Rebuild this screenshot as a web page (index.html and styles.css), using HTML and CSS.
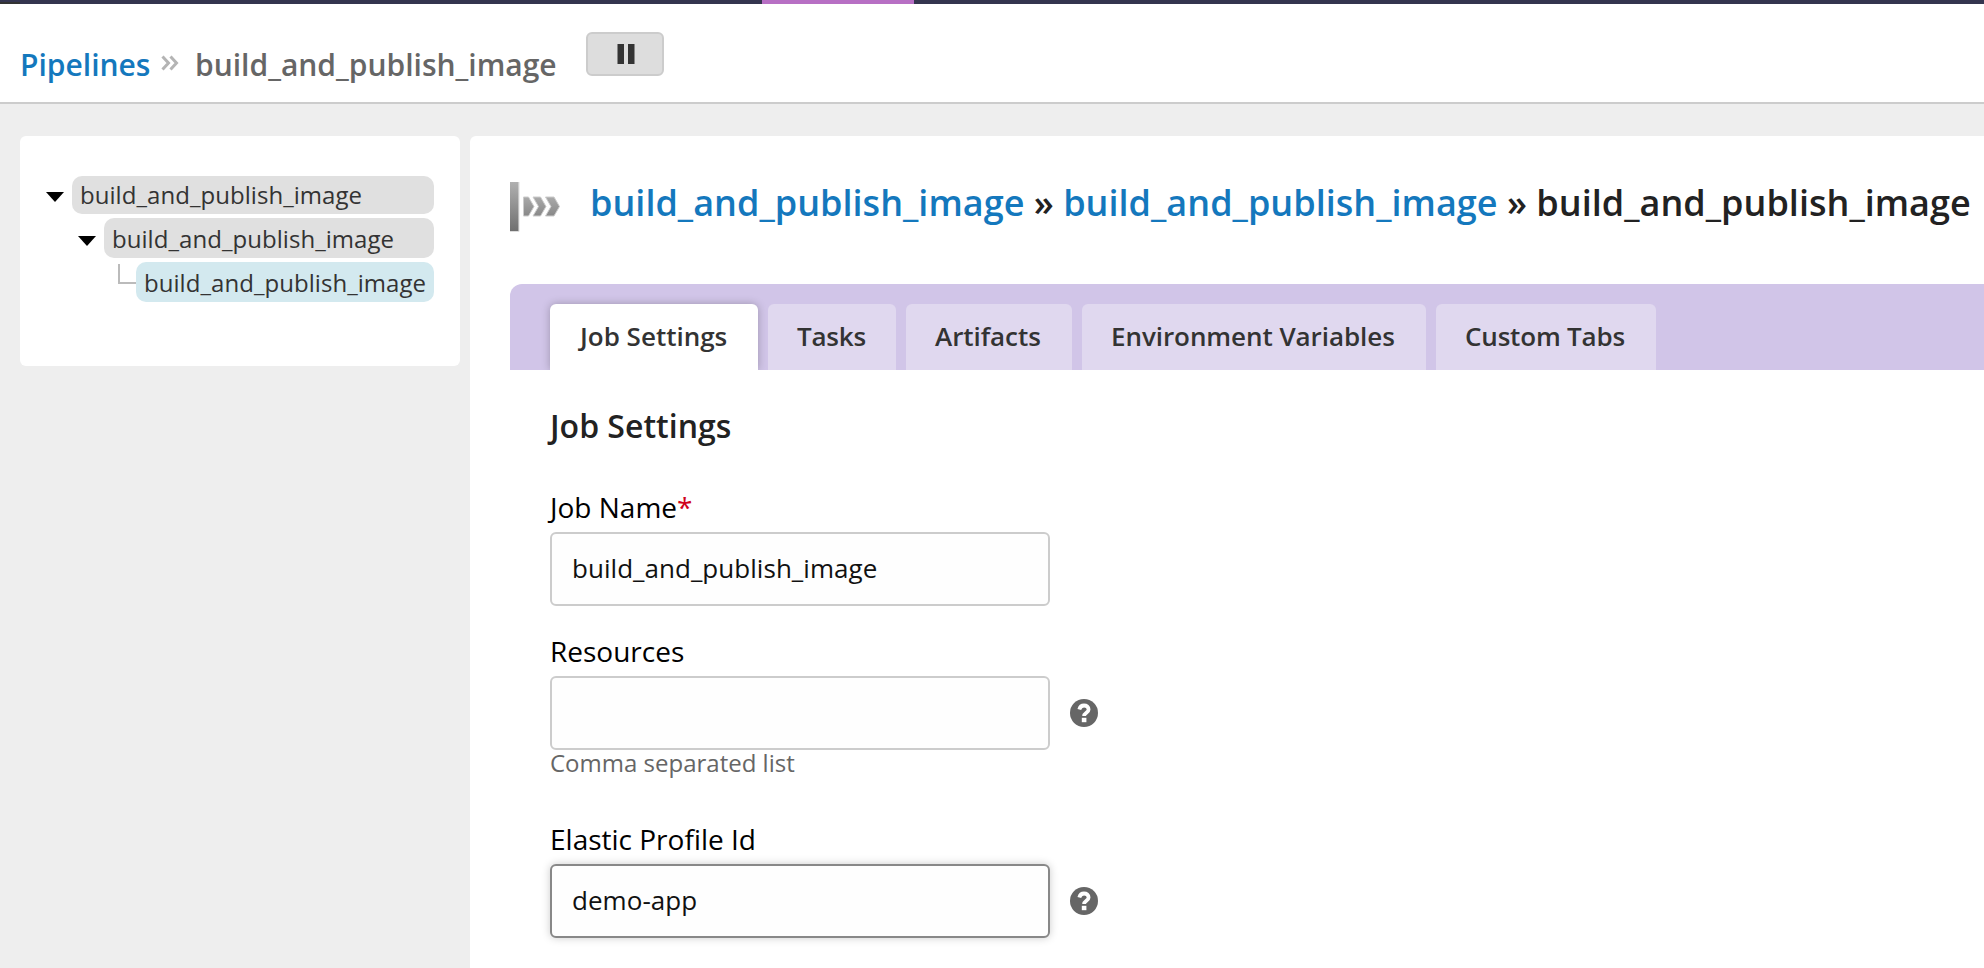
FILE: index.html
```html
<!DOCTYPE html>
<html lang="en">
<head>
<meta charset="utf-8">
<title>Job Settings</title>
<link rel="stylesheet" href="styles.css">
</head>
<body>
<div class="topbar"><span class="topbar-start"></span><span class="topbar-active"></span></div>
<header class="header">
  <a class="crumb-link">Pipelines</a>
  <svg class="crumb-sep" width="18" height="16" viewBox="0 0 18 16"><path d="M1.500 1.500 7.500 8l-6 6.500M9.500 1.500 15.500 8l-6 6.500" fill="none" stroke="#b4b4b4" stroke-width="3"/></svg>
  <span class="crumb-current">build_and_publish_image</span>
  <button class="pause"><svg class="pause-icon" width="18" height="22" viewBox="0 0 18 22"><path d="M.5 1h6.500v20H.5zM11 1h6.500v20H11z" fill="#333"/></svg></button>
</header>
<div class="layout">
  <nav class="sidebar">
    <div class="tree">
      <div class="node"><span class="arrow"></span><a class="label first">build_and_publish_image</a></div>
      <div class="node level2"><span class="arrow"></span><a class="label">build_and_publish_image</a></div>
      <div class="node level3"><span class="elbow"></span><a class="label selected">build_and_publish_image</a></div>
    </div>
  </nav>
  <main class="main">
    <div class="title-row">
      <svg class="job-icon" width="52" height="54" viewBox="0 0 52 54">
        <defs><linearGradient id="g" x1="0" y1="0" x2="0" y2="1"><stop offset="0" stop-color="#b0b0b0"/><stop offset="1" stop-color="#707070"/></linearGradient>
        <linearGradient id="h" x1="0" y1="0" x2="0" y2="1"><stop offset="0" stop-color="#aaa"/><stop offset="1" stop-color="#888"/></linearGradient></defs>
        <path d="M0 51.500h9V2" fill="none" stroke="#ddd"/>
        <path d="M0 2h8.500v49H0z" fill="url(#g)"/>
        <path d="M13.500 17h5l5.500 9.500-5.500 9.500h-5zM23 17h7.500l5.500 9.500-5.500 9.500H23l5.500-9.500zM35.500 17H44l5.500 9.500L44 36h-8.500l5.500-9.500z" fill="url(#h)" stroke="#ccc" stroke-width="1"/>
      </svg>
      <h1 class="title"><a>build_and_publish_image</a> » <a>build_and_publish_image</a> » build_and_publish_image</h1>
    </div>
    <div class="tabs">
      <a class="tab settings active">Job Settings</a><a class="tab tasks">Tasks</a><a class="tab artifacts">Artifacts</a><a class="tab environment">Environment Variables</a><a class="tab custom">Custom Tabs</a>
    </div>
    <form class="form">
      <h2 class="form-title">Job Settings</h2>
      <div class="field">
        <label class="field-label">Job Name<span class="required">*</span></label>
        <div class="control"><input class="input" type="text" value="build_and_publish_image"></div>
      </div>
      <div class="field resources">
        <label class="field-label">Resources</label>
        <div class="control"><input class="input" type="text" value="">
          <svg class="help" width="28" height="28" viewBox="0 0 28 28"><circle cx="14" cy="14" r="14" fill="#666"/><path d="M9.300 10.500C10 7.800 11.800 6.500 14 6.500c2.600 0 4.600 1.500 4.600 3.900 0 3.300-4.500 3.300-4.500 6.600" fill="none" stroke="#fff" stroke-width="3.800"/><path d="M11.800 18.800h4.600v4.400h-4.600z" fill="#fff"/></svg></div>
        <div class="hint">Comma separated list</div>
      </div>
      <div class="field elastic">
        <label class="field-label">Elastic Profile Id</label>
        <div class="control"><input class="input focused" type="text" value="demo-app">
          <svg class="help" width="28" height="28" viewBox="0 0 28 28"><circle cx="14" cy="14" r="14" fill="#666"/><path d="M9.300 10.500C10 7.800 11.800 6.500 14 6.500c2.600 0 4.600 1.500 4.600 3.900 0 3.300-4.500 3.300-4.500 6.600" fill="none" stroke="#fff" stroke-width="3.800"/><path d="M11.800 18.800h4.600v4.400h-4.600z" fill="#fff"/></svg></div>
      </div>
    </form>
  </main>
</div>
</body>
</html>
```
FILE: styles.css
```css
* { box-sizing: border-box; }
body { margin: 0; height: 968px; overflow: hidden; background: #eee; font-family: "Open Sans", sans-serif; color: #000; display: flex; flex-direction: column; }
a { color: #1478bd; }
.topbar { height: 4px; background: #34354f; display: flex; flex: none; }
.topbar-start { width: 20px; margin-top: 2px; background: #333; }
.topbar-active { width: 152px; margin-left: 742px; background: #b76fc4; }
.header { height: 100px; flex: none; background: #fff; border-bottom: 2px solid #ccc; display: flex; align-items: flex-start; padding: 28px 20px 0; font-size: 30px; font-weight: 600; line-height: 66px; white-space: nowrap; }
.crumb-link { width: 130px; }
.crumb-sep { margin: 23px 16px 0 11px; flex: none; }
.crumb-current { color: #666; width: 391px; }
.pause { width: 78px; height: 44px; padding: 0; background: #ddd; border: 2px solid #ccc; border-radius: 6px; display: flex; align-items: center; justify-content: center; }
.pause-icon { margin-left: 2px; }
.layout { flex: 1; display: flex; align-items: flex-start; padding: 32px 0 0 20px; gap: 10px; min-height: 0; }
.sidebar { width: 440px; height: 230px; flex: none; background: #fff; border-radius: 6px; padding: 40px 26px; }
.tree { display: flex; flex-direction: column; gap: 4px; font-size: 24px; letter-spacing: .05px; }
.node { display: flex; }
.level2 { padding-left: 32px; }
.level3 { padding-left: 72px; }
.arrow { width: 18px; height: 10px; margin: 16px 8px 0 0; background: #000; clip-path: polygon(0 0, 100% 0, 50% 100%); flex: none; }
.level2 .arrow { margin-top: 18px; }
.elbow { width: 18px; height: 20px; margin-top: 2px; border-left: 2px solid #bbb; border-bottom: 2px solid #bbb; flex: none; }
.label { flex: 1; height: 40px; padding-left: 8px; line-height: 42px; background: #e0e0e0; border-radius: 10px; color: #333; white-space: nowrap; }
.label.first { height: 38px; line-height: 38px; }
.label.selected { background: #d3e9ef; }
.main { flex: 1; align-self: stretch; min-width: 0; overflow: hidden; background: #fff; border-radius: 6px 0 0 0; padding-left: 40px; }
.title-row { height: 148px; display: flex; align-items: flex-start; }
.job-icon { margin-top: 44px; flex: none; }
.title { margin: 42px 0 0 28px; font-size: 36px; line-height: 50px; font-weight: 600; letter-spacing: .02px; color: #222; white-space: nowrap; }
.tabs { height: 86px; background: #d1c5e8; border-radius: 12px 0 0 0; padding: 20px 0 0 40px; display: flex; gap: 10px; overflow: hidden; }
.tab { height: 66px; padding-left: 29px; background: #e0d8ef; border-radius: 6px 6px 0 0; font-size: 26px; font-weight: 600; line-height: 64px; letter-spacing: -.06px; color: #333; white-space: nowrap; }
.settings { width: 208px; padding-left: 30px; letter-spacing: 0; }
.tasks { width: 128px; letter-spacing: -.2px; }
.artifacts { width: 166px; }
.environment { width: 344px; }
.custom { width: 220px; letter-spacing: -.18px; }
.tab.active { background: #fff; box-shadow: 0 0 8px rgba(0, 0, 0, .25); }
.form { padding: 34px 0 0 40px; }
.form-title { margin: 0; font-size: 32px; line-height: 44px; font-weight: 600; color: #222; }
.field { height: 158px; padding-top: 39px; }
.field.resources { height: 174px; padding-top: 25px; }
.field.elastic { padding-top: 39px; }
.field-label { display: block; height: 45px; font-size: 28px; line-height: 40px; }
.required { color: #d0021b; }
.control { display: flex; align-items: center; gap: 20px; }
.input { width: 500px; height: 74px; padding: 0 20px 2px; background: #fefefe; border: 2px solid #ccc; border-radius: 6px; font: 26px "Open Sans", sans-serif; letter-spacing: .04px; color: #111; }
.input.focused { border-color: #888; box-shadow: 0 0 8px #ccc; }
.hint { font-size: 24px; line-height: 26px; color: #666; }
```
